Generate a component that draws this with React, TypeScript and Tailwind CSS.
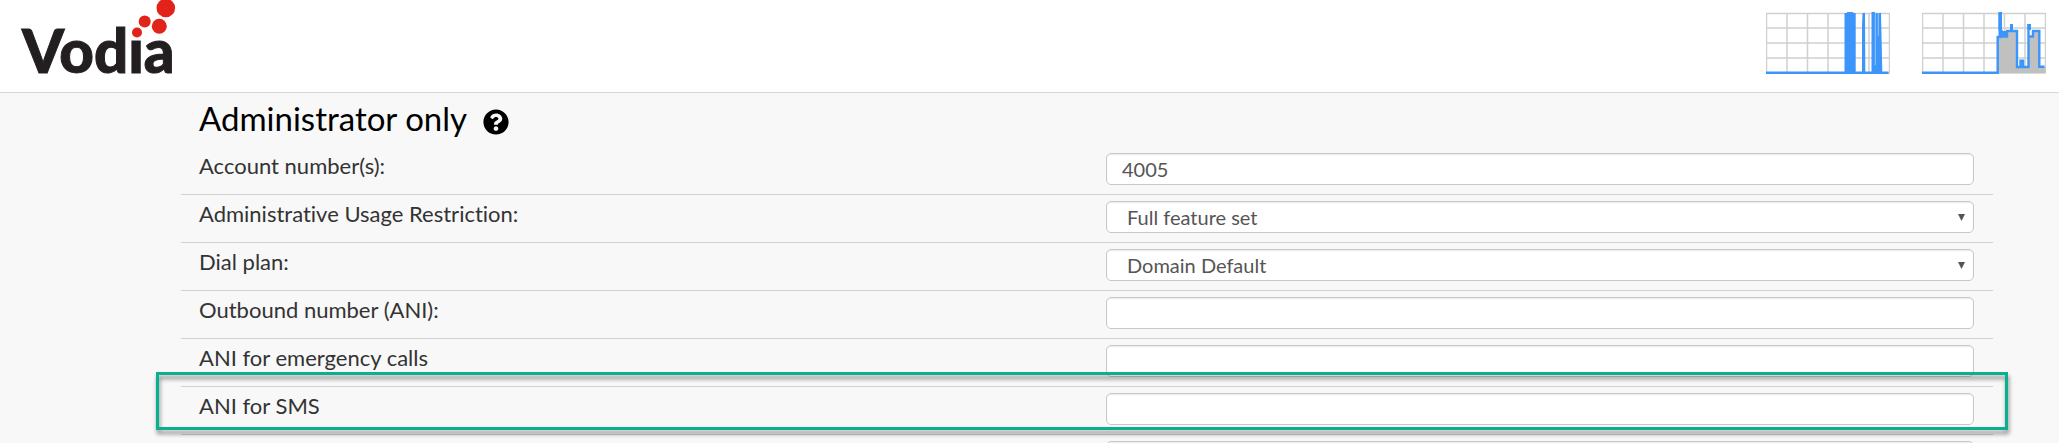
import type { ReactNode } from "react"
import { FaQuestionCircle } from "react-icons/fa"

type FieldProps = {
    id: string
    label: string
    value?: string
    options?: string[]
}

const fields: FieldProps[] = [
    { id: "account", label: "Account number(s):", value: "4005" },
    { id: "restriction", label: "Administrative Usage Restriction:", options: ["Full feature set"] },
    { id: "dialplan", label: "Dial plan:", options: ["Domain Default"] },
    { id: "ani", label: "Outbound number (ANI):" },
    { id: "ani-emergency", label: "ANI for emergency calls" },
    { id: "ani-sms", label: "ANI for SMS" },
    { id: "next", label: "" },
]

const Logo = () => {
    return <svg width="160" height="80" viewBox="0 0 160 80" className="overflow-visible" role="img" aria-label="Vodia">
        <text x="0" y="73" fill="#231f20" stroke="#231f20" strokeWidth="1" className="font-['Lato',sans-serif] text-[60px] font-black">Vodıa</text>
        <circle cx="115" cy="32.500" r="5" fill="#e2231a" />
        <circle cx="122.700" cy="21.500" r="6" fill="#e2231a" />
        <circle cx="137.300" cy="26.300" r="7.500" fill="#e2231a" />
        <circle cx="143.800" cy="8" r="9.300" fill="#e2231a" />
    </svg>
}

const Chart = ({ children, label }: { children: ReactNode, label: string }) => {
    return <svg width="124" height="64" viewBox="0 0 124 64" role="img" aria-label={label}>
        <g fill="none" stroke="#d0d0d0" strokeWidth="1.5">
            <path d="M.5 1.500H123.500V61H.5Z" />
            <path d="M21 1V61M41.500 1V61M62 1V61M82.500 1V61M103 1V61" />
            <path d="M0 16H124M0 31H124M0 46H124" />
        </g>
        {children}
    </svg>
}

const Field = ({ id, label, value, options }: FieldProps) => {
    const box = "block h-8 w-full rounded-[5px] border border-[#c8c8c8] bg-white text-xl leading-7 text-[#555] shadow-[inset_0_1px_1px_rgba(0,0,0,0.08)]"
    return <div className="grid h-12 grid-cols-2 border-b border-[#d2d2d2]">
        <label htmlFor={id} className="px-[18px] pt-[5px] text-[22px] leading-7 text-[#333]">{label}</label>
        <div className="px-[19px] pt-1.5">
            {options ? <div className="relative">
                <select id={id} className={box + " appearance-none pr-8 pl-5"}>
                    {options.map((option) => <option key={option}>{option}</option>)}
                </select>
                <svg width="7" height="7" viewBox="0 0 7 7" className="pointer-events-none absolute top-[13px] right-[9px]">
                    <path d="M0 0H7L3.500 7Z" fill="#555" />
                </svg>
            </div> : <input id={id} type="text" aria-label={label || "Next field"} defaultValue={value} className={box + " px-[15px]"} />}
        </div>
    </div>
}

export default function App() {
    return <div className="h-screen overflow-hidden bg-[#f8f8f8] font-['Lato',sans-serif] [font-variant-ligatures:none]">
        <header className="flex h-[93px] items-start justify-between border-b border-[#d6d6d6] bg-white pr-[13px] pl-[22px]">
            <Logo />
            <div className="flex gap-8 pt-3">
                <Chart label="Calls">
                    <g fill="#3c96f9">
                        <path d="M0 59.500H78.500V1H81V0H87V1H89.700V59.500H96V14L96.500 1H99L99.300 59.500H105.500V0H109V1H115L116.300 59.500H122.500V62H0Z" />
                        <path d="M109.300 1V53M112.300 1V24" stroke="#a9d0fc" strokeWidth=".8" />
                    </g>
                </Chart>
                <Chart label="Load">
                    <path d="M76 61V25H77.500V19H95V55H98.500V49H101V55H106V25H111V19H117V55H123.500V61Z" fill="#c0c0c0" />
                    <path d="M0 60.700H75.700V25H77.700V1V19H79.500V24.500H82V20V24.500H85V19H89.300V12V19H95V55H98.500V48.800H101V55H106.500V12V24.500H111V19H117.300V54.700H122.500" fill="none" stroke="#3c96f9" strokeWidth="2.400" />
                    <path d="M76.500 0H80V18H76.500ZM88 12H91V19H88ZM105.500 12H109V18H105.500ZM80 19H85V25H80Z" fill="#3c96f9" />
                </Chart>
            </div>
        </header>
        <main className="mr-[66px] ml-[181px]">
            <h1 className="flex h-[54px] items-center gap-4 px-[18px] pb-0.5 text-[33px] text-black">
                Administrator only
                <button type="button" aria-label="Help" className="pt-1.5"><FaQuestionCircle size={26} /></button>
            </h1>
            <form className="relative">
                {fields.map((field) => <Field key={field.id} {...field} />)}
                <div className="pointer-events-none absolute top-[225px] right-[-15px] left-[-25px] h-[58px] border-3 border-[#08b08f] drop-shadow-[1px_4px_2px_rgba(0,0,0,0.45)]"></div>
            </form>
        </main>
    </div>
}
